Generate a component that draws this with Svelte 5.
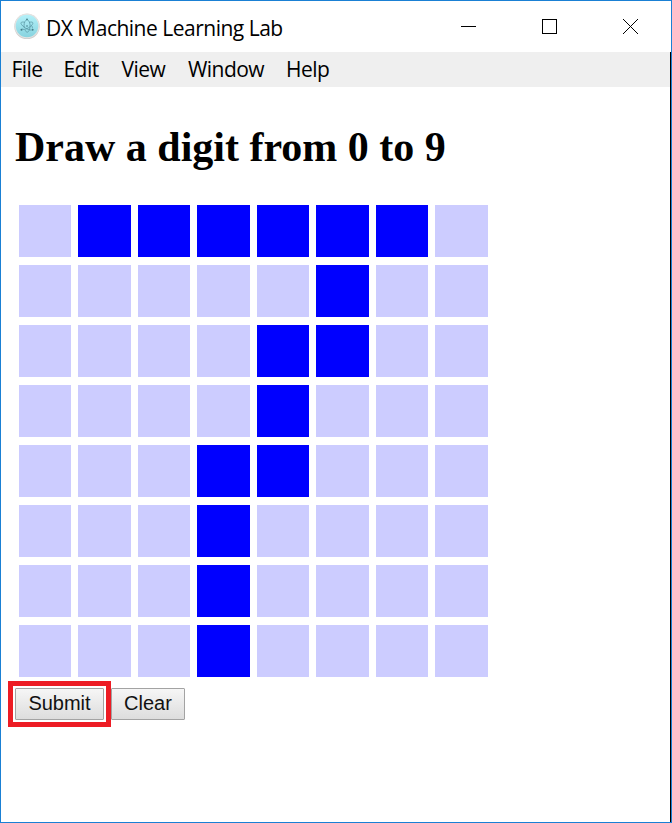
<script>
  const menu = [
    { label: 'File', width: 52 },
    { label: 'Edit', width: 58 },
    { label: 'View', width: 66.5 },
    { label: 'Window', width: 98 },
    { label: 'Help', width: 60 }
  ];

  const blank = [
    '.######.',
    '.....#..',
    '....##..',
    '....#...',
    '...##...',
    '...#....',
    '...#....',
    '...#....'
  ];

  let cells = $state(blank.map((row) => [...row].map((c) => c === '#')));

  function clear() {
    cells = cells.map((row) => row.map(() => false));
  }
</script>

<div class="window">
  <header class="titlebar">
    <svg class="logo" width="26" height="27" viewBox="0 0 26 27">
      <defs>
        <linearGradient id="disc" x1="0" y1="0" x2="0" y2="1">
          <stop offset="0" stop-color="#b4f1f9" />
          <stop offset="1" stop-color="#87d3df" />
        </linearGradient>
      </defs>
      <circle cx="13" cy="13.4" r="12.7" fill="#cfcfcf" />
      <circle cx="13" cy="12.8" r="12.4" fill="#e3e3e1" />
      <circle cx="13" cy="13" r="11.3" fill="url(#disc)" />
      <g fill="none" stroke="#5b98a4" stroke-width="0.8">
        <path d="M8.2 15.8C9.6 17.8 16.3 14.6 18.4 11.4C19.8 9.2 18 8.7 15.4 9.3" />
        <path d="M10.4 9.2C7.4 8.6 6.2 9.6 7.5 11.5C9 13.8 13 16.7 17.4 17.2" />
        <path d="M13.8 7C16 8.4 17 14 15 17.6C14 19.6 12.5 20 11.2 17.2" />
        <path d="M12 7.2C10.2 8.6 9.7 12 10.3 14.6" />
        <path d="M18.2 15.2C18.8 14.4 18 13 16.8 12" />
      </g>
      <g fill="#457c88">
        <circle cx="13" cy="13" r="0.8" />
        <circle cx="13" cy="6.5" r="0.9" />
        <circle cx="7.5" cy="16.8" r="1" />
        <circle cx="18.6" cy="16.8" r="1" />
      </g>
    </svg>
    <span class="title">DX Machine Learning Lab</span>
    <div class="controls">
      <svg width="81" height="51" viewBox="0 0 81 51" shape-rendering="crispEdges">
        <rect x="33" y="25" width="15" height="1" />
      </svg>
      <svg width="81" height="51" viewBox="0 0 81 51" shape-rendering="crispEdges">
        <rect x="33.5" y="18.5" width="14" height="14" fill="none" stroke="#000" />
      </svg>
      <svg width="81" height="51" viewBox="0 0 81 51">
        <path d="M33 18 48 33M48 18 33 33" fill="none" stroke="#000" stroke-width="1" />
      </svg>
    </div>
  </header>
  <div class="body">
    <nav>
      {#each menu as item}
        <span style:width="{item.width}px">{item.label}</span>
      {/each}
    </nav>
    <main>
      <h1>Draw a digit from 0 to 9</h1>
      <div class="grid">
        {#each cells as row, y}
          {#each row as on, x}
            <!-- svelte-ignore a11y_click_events_have_key_events, a11y_no_static_element_interactions -->
            <div class="cell" class:on onclick={() => (cells[y][x] = !cells[y][x])}></div>
          {/each}
        {/each}
      </div>
      <div class="actions">
        <div class="highlight"><button class="submit">Submit</button></div>
        <button class="clear" onclick={clear}>Clear</button>
      </div>
    </main>
  </div>
</div>

<style>
  .window {
    box-sizing: border-box;
    width: 672px;
    height: 823px;
    border: 1px solid #1a80d4;
    background: #fff;
    color: #000;
    display: flex;
    flex-direction: column;
    overflow: hidden;
  }
  .titlebar {
    height: 51px;
    flex: none;
    display: flex;
    align-items: center;
    padding-left: 13px;
    font-family: 'Open Sans', 'Noto Sans', sans-serif;
  }
  .logo {
    flex: none;
  }
  .title {
    margin-left: 6px;
    padding-top: 2px;
    font-size: 21px;
    letter-spacing: -0.5px;
    white-space: nowrap;
  }
  .controls {
    margin-left: auto;
    display: flex;
  }
  .body {
    flex: 1;
    border-right: 1px solid #000;
  }
  nav {
    height: 35px;
    box-sizing: border-box;
    padding-left: 10.5px;
    background: #efefef;
    display: flex;
    line-height: 35px;
    font-family: 'Open Sans', 'Noto Sans', sans-serif;
    font-size: 21px;
    letter-spacing: -0.55px;
  }
  main {
    padding: 36px 0 0 14px;
  }
  h1 {
    margin: 0;
    height: 48px;
    line-height: 48px;
    font-family: 'Liberation Serif', serif;
    font-size: 42px;
    font-weight: bold;
    white-space: nowrap;
  }
  .grid {
    margin: 34px 0 0 3.75px;
    display: grid;
    grid-template-columns: repeat(8, 52.5px);
    grid-auto-rows: 52px;
    gap: 8px 7px;
  }
  .cell {
    background: #ccccff;
  }
  .cell.on {
    background: #0000ff;
  }
  .actions {
    display: flex;
    align-items: center;
    margin: 4px 0 0 -7px;
  }
  .highlight {
    box-sizing: border-box;
    width: 103px;
    height: 46px;
    border: 5px solid #ed1c24;
    padding: 2px;
  }
  button {
    display: block;
    box-sizing: border-box;
    height: 32px;
    padding: 0 0 3px;
    border: 1px solid #a3a3a3;
    border-radius: 1px;
    background: linear-gradient(#f6f6f6, #dddddd);
    color: #111;
    font: 20px/28px 'Liberation Sans', Arial, sans-serif;
  }
  .submit {
    width: 89px;
  }
  .clear {
    width: 74px;
  }
</style>
